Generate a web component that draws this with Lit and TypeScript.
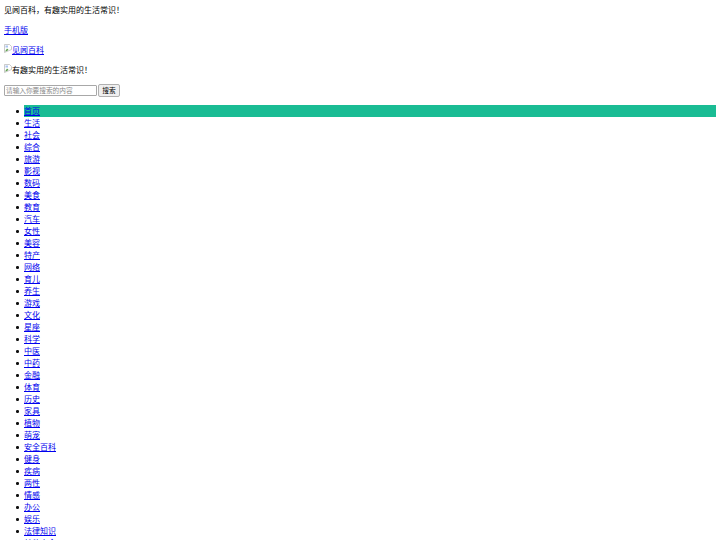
import { LitElement, html, css } from "lit";
import { customElement } from "lit/decorators.js";

const NAV_ITEMS = [
  "首页", "生活", "社会", "综合", "旅游", "影视", "数码", "美食", "教育", "汽车",
  "女性", "美容", "特产", "网络", "育儿", "养生", "游戏", "文化", "星座", "科学",
  "中医", "中药", "金融", "体育", "历史", "家具", "植物", "萌宠", "安全百科", "健身",
  "疾病", "两性", "情感", "办公", "娱乐", "法律知识", "其他大全",
];

const BROKEN_IMG = html`<svg class="broken" viewBox="0 0 8 9">
  <path d="M.5.5h5l2 2v3l-7 3z" fill="#fff" stroke="#b4b4b4" stroke-width=".7" />
  <path d="M1 7.5l2-3 1.5 1.2L3 7z" fill="#5fa04e" />
  <rect x="1.5" y="1.5" width="2.5" height="2" fill="#a9c4f0" />
</svg>`;

@customElement("app-root")
export class AppRoot extends LitElement {
  static styles = css`
    :host {
      display: block;
      height: 540px;
      overflow: hidden;
      font-family: "Liberation Serif", "Noto Sans CJK SC", sans-serif;
      font-size: 8px;
      line-height: 14px;
      color: #000;
    }

    p {
      margin: 8px 0;
      height: 12px;
    }

    .page {
      padding: 4px 4px 0;
    }

    .page > p:first-child {
      margin-top: 0;
    }

    a {
      color: #00e;
      text-decoration: underline;
    }

    .broken {
      width: 8px;
      height: 9px;
      vertical-align: 0;
    }

    form {
      display: flex;
      align-items: center;
      gap: 1px;
      height: 13px;
      margin: 8px 0;
    }

    input {
      box-sizing: border-box;
      width: 93px;
      height: 11px;
      padding: 0 1px;
      border: 1px solid #a8a8a8;
      border-radius: 1px;
      font-family: inherit;
      font-size: 6.67px;
      line-height: 9px;
    }

    input::placeholder {
      color: #8a8a8a;
    }

    button {
      box-sizing: border-box;
      height: 13px;
      width: 22px;
      padding: 0;
      border: 1px solid #b0b0b0;
      border-radius: 2px;
      background: #efefef;
      color: #000;
      font-family: inherit;
      font-size: 6.67px;
      line-height: 11px;
    }

    ul {
      margin: 8px 0 0;
      padding: 0 0 0 20px;
      list-style: none;
    }

    li {
      position: relative;
      height: 12px;
    }

    li::before {
      content: "";
      position: absolute;
      left: -8px;
      top: 5px;
      width: 2.5px;
      height: 2.5px;
      border-radius: 50%;
      background: #111;
    }

    li.current {
      background: #1abc94;
    }
  `;

  protected render() {
    return html`
      <div class="page">
        <p>见闻百科，有趣实用的生活常识！</p>
        <p><a href="#">手机版</a></p>
        <p><a href="#">${BROKEN_IMG}见闻百科</a></p>
        <p>${BROKEN_IMG}有趣实用的生活常识！</p>
        <form>
          <input type="text" placeholder="请输入你要搜索的内容" />
          <button type="button">搜索</button>
        </form>
        <ul>
          ${NAV_ITEMS.map(
            (item, i) =>
              html`<li class=${i === 0 ? "current" : ""}><a href="#">${item}</a></li>`,
          )}
        </ul>
      </div>
    `;
  }
}

declare global {
  interface HTMLElementTagNameMap {
    "app-root": AppRoot;
  }
}
